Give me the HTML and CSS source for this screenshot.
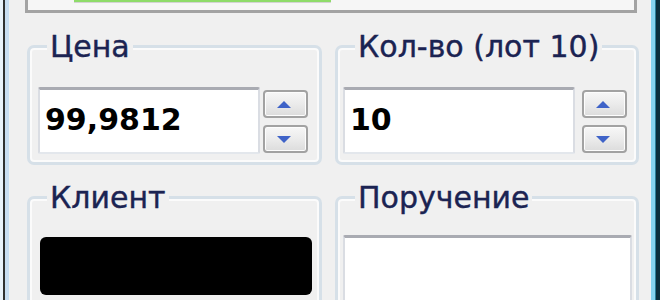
FILE: index.html
```html
<!DOCTYPE html>
<html lang="ru">
<head>
  <meta charset="UTF-8" />
  <title>Заявка</title>
  <link rel="stylesheet" href="styles.css">
</head>
<body>
  <div class="window">
    <div class="frame frame-left"></div>

    <main class="client">
      <div class="top-panel">
        <div class="progress"></div>
      </div>

      <div class="groups">
        <section class="group group-price">
          <h2 class="group-title">Цена</h2>
          <div class="spin-row">
            <div class="textbox value">99,9812</div>
            <div class="spinner">
              <button class="spin" type="button" aria-label="Больше"><span class="arrow-up"></span></button>
              <button class="spin" type="button" aria-label="Меньше"><span class="arrow-down"></span></button>
            </div>
          </div>
        </section>

        <section class="group group-qty">
          <h2 class="group-title">Кол-во (лот 10)</h2>
          <div class="spin-row">
            <div class="textbox value">10</div>
            <div class="spinner">
              <button class="spin" type="button" aria-label="Больше"><span class="arrow-up"></span></button>
              <button class="spin" type="button" aria-label="Меньше"><span class="arrow-down"></span></button>
            </div>
          </div>
        </section>

        <section class="group group-client">
          <h2 class="group-title">Клиент</h2>
          <div class="client-box"></div>
        </section>

        <section class="group group-order">
          <h2 class="group-title">Поручение</h2>
          <div class="textbox order-box"></div>
        </section>
      </div>
    </main>

    <div class="frame frame-right"></div>
  </div>
</body>
</html>
```

FILE: styles.css
```css
:root{
  --face:#f0f0f0;
  --group-line:#d6e0e8;
  --caption:#1b2352;
  --arrow:#3f63c8;
}

* { box-sizing: border-box; }
html, body { margin:0; height:100%; }
body{
  width:660px; height:300px; overflow:hidden;
  background:var(--face);
  font-family: "DejaVu Sans", Tahoma, sans-serif;
}

.window{ display:flex; height:300px; overflow:hidden; }

/* window frame slivers */
.frame{ flex:none; }
.frame-left{
  width:9px;
  background: linear-gradient(to right, #eaf2fa 0 3px, #303030 3px 5px, #c9ddf1 5px 9px);
}
.frame-right{
  width:10px;
  background: linear-gradient(to right, #eef3f7 0 1px, #86d4ef 1px 5px, #2a7f99 5px 6px, #0b2f3c 6px 10px);
}

.client{ flex:1; height:300px; overflow:hidden; padding:0 11px 0 18px; background:var(--face); }

/* panel cut off at the top */
.top-panel{
  width:612px; height:13px; margin-left:-2px;
  border:3px solid #a3a3a3; border-top:none;
  background:#f6f6f6;
}
.progress{
  width:257px; height:3px; margin-left:46px;
  background:#8fdc6a; border-bottom:1px solid #d4d4d4;
}

.groups{
  display:grid;
  grid-template-columns: 295px 304px;
  grid-template-rows: 120px 150px;
  column-gap:13px; row-gap:31px;
  margin-top:32px;
}

.group{
  display:flex; flex-direction:column;
  border:3px solid var(--group-line);
  border-radius:7px;
  box-shadow: inset 0 0 0 2px #fbfbfb;
}

.group-title{
  align-self:flex-start;
  margin:-16px 0 0 17px; padding:0 3px;
  background:var(--face);
  font-size:30px; line-height:30px; font-weight:normal;
  color:var(--caption);
  -webkit-text-stroke:0.4px var(--caption);
}

/* number field + spinner */
.spin-row{ display:flex; margin-top:25px; }
.group-price .spin-row{ padding:0 11px 0 8px; gap:3px; }
.group-qty .spin-row{ padding:0 9px 0 5px; gap:7px; }

.textbox{
  background:#fff;
  border-top:3px solid #a9abb2;
  border-left:2px solid #dadde3; border-right:2px solid #dadde3;
  border-bottom:2px solid #e3e7ec;
  border-radius:2px;
}
.value{
  flex:1; height:67px;
  padding:15px 5px 0;
  font-size:30px; line-height:30px; font-weight:bold; color:#000;
}

.spinner{ width:45px; flex:none; display:flex; flex-direction:column; gap:7px; padding-top:3px; }
.spin{
  height:28px; padding:0; margin:0;
  display:flex; align-items:center; justify-content:center;
  border:2px solid #a2a2a2; border-radius:4px;
  background: linear-gradient(#f7f7f7, #ebebeb 50%, #dcdcdc);
  box-shadow: inset 0 0 0 1px #fdfdfd;
}
.arrow-up, .arrow-down{
  width:0; height:0; margin-right:3px;
  border-left:7px solid transparent; border-right:7px solid transparent;
}
.arrow-up{ border-bottom:7px solid var(--arrow); }
.arrow-down{ border-top:7px solid var(--arrow); }

/* bottom row */
.client-box{
  height:58px; margin:24px 7px 0 10px;
  background:#000; border-radius:6px;
}
.order-box{ height:80px; margin:22px 4px 0 5px; }
```
